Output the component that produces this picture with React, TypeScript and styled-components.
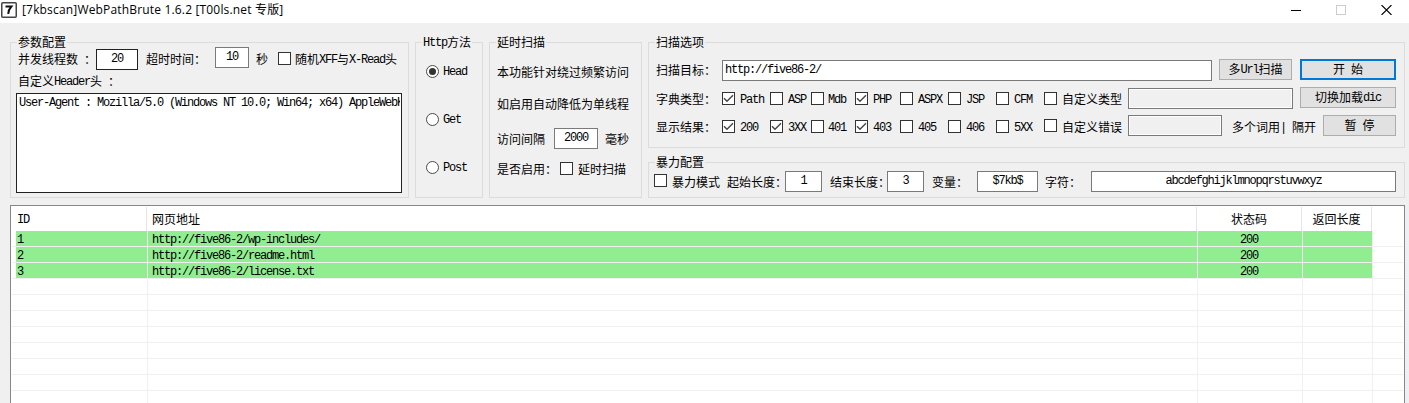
import React from 'react';
import styled, { createGlobalStyle, css } from 'styled-components';

const GlobalStyle = createGlobalStyle`
  * { box-sizing: border-box; }
  html, body { margin: 0; padding: 0; overflow: hidden; background: #f0f0f0; }
`;

const Window = styled.div`
  width: 1409px;
  height: 403px;
  overflow: hidden;
  display: flex;
  flex-direction: column;
  background: #f0f0f0;
  color: #000;
  font: 12px/14px 'Noto Sans CJK SC', sans-serif;
`;

const TitleBar = styled.header`
  height: 23px;
  flex: none;
  display: flex;
  align-items: flex-start;
  padding: 2px 17px 0 1px;
  background: #fff;
`;

const Title = styled.h1`
  margin: 0 auto 0 5px;
  font: 400 12px/16px 'Open Sans', 'Noto Sans CJK SC', sans-serif;
  letter-spacing: 0.17px;
  white-space: pre;
`;

const WindowControls = styled.div`
  display: flex;
  gap: 35px;
  padding-top: 3px;
`;

const Latin = styled.span`
  font-family: 'Liberation Mono', monospace;
  font-size: 12px;
  line-height: 1;
  letter-spacing: -1.2px;
  vertical-align: 1px;
`;

const Label = styled.span`
  display: block;
  height: 14px;
  line-height: 14px;
  white-space: pre;
`;

const Panels = styled.main`
  flex: none;
  height: 163px;
  margin-top: 19px;
  padding: 0 4px 7px 10px;
  display: grid;
  grid-template-columns: 399px 68px 153px 757px;
  column-gap: 6px;
`;

const RightColumn = styled.div`
  display: flex;
  flex-direction: column;
  gap: 14px;
`;

const Group = styled.section<{ $height: number }>`
  height: ${p => p.$height}px;
  border: 1px solid #dcdcdc;
`;

const Legend = styled.div`
  width: max-content;
  height: 12px;
  margin: -8px 0 0 6px;
  padding: 0 1px;
  line-height: 12px;
  white-space: pre;
  background: #f0f0f0;
`;

const Row = styled.div<{ $cols?: string; $height: number; $left?: number; $top?: number }>`
  display: grid;
  grid-template-columns: ${p => p.$cols ?? '1fr'};
  align-items: center;
  height: ${p => p.$height}px;
  margin: ${p => p.$top ?? 0}px 0 0 ${p => p.$left ?? 7}px;
`;

const Field = styled.div<{ $w: number; $dark?: boolean; $disabled?: boolean; $left?: boolean; $align?: string }>`
  width: ${p => p.$w}px;
  height: 21px;
  align-self: ${p => p.$align ?? 'center'};
  padding: 0 2px 3px;
  display: flex;
  align-items: center;
  justify-content: ${p => (p.$left ? 'flex-start' : 'center')};
  border: 1px solid ${p => (p.$dark ? '#222' : '#7a7a7a')};
  background: ${p => (p.$disabled ? '#f0f0f0' : '#fff')};
  ${p => p.$disabled && css`box-shadow: inset 0 0 0 1px #fff;`}
`;

const HeaderBox = styled.div`
  width: 386px;
  height: 100px;
  margin: 2px 0 0 5px;
  padding: 1px 2px;
  border: 1px solid #222;
  background: #fff;
`;

const ClippedLine = styled.div`
  width: 381px;
  overflow: hidden;
  white-space: pre;
`;

const Button = styled.button<{ $w: number; $primary?: boolean; $align?: string }>`
  width: ${p => p.$w}px;
  height: 21px;
  align-self: ${p => p.$align ?? 'center'};
  padding: 0 0 1px;
  display: flex;
  align-items: center;
  justify-content: center;
  border: ${p => (p.$primary ? '2px solid #0078d7' : '1px solid #adadad')};
  background: #e1e1e1;
  color: #000;
  font: inherit;
`;

const Box = styled.span<{ $raise?: boolean }>`
  display: block;
  width: 13px;
  height: 13px;
  margin-bottom: ${p => (p.$raise ? 2 : 0)}px;
  border: 1px solid #333;
  background: #fff;
  svg { display: block; }
`;

const Radio = styled.span`
  display: flex;
  align-items: center;
  justify-content: center;
  width: 13px;
  height: 13px;
  border: 1px solid #4a4a4a;
  border-radius: 50%;
  background: #fff;
`;

const RadioDot = styled.span`
  width: 7px;
  height: 7px;
  border-radius: 50%;
  background: #333;
`;

const ResultTable = styled.section`
  flex: 1;
  width: 1395px;
  margin-left: 10px;
  padding: 1px 1px 0;
  border: 1px solid #828790;
  border-bottom: 0;
  background: #fff;
  overflow: hidden;
`;

const HeadRow = styled.div`
  display: grid;
  grid-template-columns: 135px 1050px 105px 70px 31px;
  height: 24px;
`;

const HeadCell = styled.div<{ $center?: boolean; $pad?: number }>`
  display: flex;
  align-items: center;
  justify-content: ${p => (p.$center ? 'center' : 'flex-start')};
  padding-left: ${p => p.$pad ?? 0}px;
  white-space: pre;
  &:not(:last-child) { border-right: 1px solid #e5e5e5; }
`;

const BodyRow = styled.div<{ $hit?: boolean }>`
  display: grid;
  grid-template-columns: 136px 1050px 105px 70px 30px;
  height: 16px;
  border-bottom: 1px solid #f0f0f0;
  background: ${p => (p.$hit ? 'linear-gradient(#90ee90, #90ee90) 4px 0 / 1356px 15px no-repeat' : '#fff')};
`;

const BodyCell = styled.div<{ $center?: boolean; $pad?: number }>`
  height: 15px;
  display: flex;
  align-items: center;
  justify-content: ${p => (p.$center ? 'center' : 'flex-start')};
  padding: 1px ${p => (p.$center ? 2 : 0)}px 0 ${p => p.$pad ?? 0}px;
  white-space: pre;
  &:not(:last-child) { border-right: 1px solid #f0f0f0; }
`;

/* Half-width runs use a 6px monospace advance, full-width glyphs take 12px. */
function Mixed({ text }: { text: string }) {
  return (
    <Label>
      {text.split(/([\x20-\x7e]+)/).map((part, i) => (i % 2 ? <Latin key={i}>{part}</Latin> : part))}
    </Label>
  );
}

function Check({ on, raise }: { on?: boolean; raise?: boolean }) {
  return (
    <Box $raise={raise}>
      {on && (
        <svg width="11" height="11" viewBox="0 0 11 11">
          <path d="M1 5.2 L4 8.2 L10 2.2" fill="none" stroke="#444" strokeWidth="1.4" />
        </svg>
      )}
    </Box>
  );
}

const OPTION_COLS = '66px 18px 30px 18px 23px 17px 27px 18px 27px 18px 30px 18px 30px 18px 30px 18px 66px';

const types: [string, boolean][] = [
  ['Path', true], ['ASP', false], ['Mdb', false], ['PHP', true], ['ASPX', false], ['JSP', false], ['CFM', false],
];
const codes: [string, boolean][] = [
  ['200', true], ['3XX', true], ['401', false], ['403', true], ['405', false], ['406', false], ['5XX', false],
];
const results = ['http://five86-2/wp-includes/', 'http://five86-2/readme.html', 'http://five86-2/license.txt'];

function Options({ items }: { items: [string, boolean][] }) {
  return (
    <>
      {items.map(([name, on]) => (
        <React.Fragment key={name}>
          <Check on={on} />
          <Mixed text={name} />
        </React.Fragment>
      ))}
    </>
  );
}

export default function App() {
  return (
    <Window>
      <GlobalStyle />
      <TitleBar>
        <svg width="16" height="16" viewBox="0 0 16 16">
          <rect x="0.75" y="0.75" width="14.5" height="14.5" rx="1" fill="#fff" stroke="#444" strokeWidth="1.5" />
          <path d="M4.5 4.5 H10.4 C8.5 6.5 7.3 9 7.2 12" fill="none" stroke="#111" strokeWidth="1.9" />
        </svg>
        <Title>[7kbscan]WebPathBrute 1.6.2 [T00ls.net 专版]</Title>
        <WindowControls>
          <svg width="10" height="10"><path d="M0 5.5H10" stroke="#000" /></svg>
          <svg width="10" height="10"><rect x="0.5" y="0.5" width="9" height="9" fill="none" stroke="#ccc" /></svg>
          <svg width="11" height="10"><path d="M0.5 0L10.5 10M10.5 0L0.5 10" stroke="#000" strokeWidth="1.1" /></svg>
        </WindowControls>
      </TitleBar>

      <Panels>
        <Group $height={156}>
          <Legend><Mixed text="参数配置" /></Legend>
          <Row $height={23} $cols="78px 50px 69px 41px 22px 17px 102px">
            <Mixed text="并发线程数 ：" />
            <Field $w={42} $dark $align="end"><Mixed text="20" /></Field>
            <Mixed text="超时时间：" />
            <Field $w={34} $align="start"><Mixed text="10" /></Field>
            <Mixed text="秒" />
            <Check />
            <Mixed text="随机XFF与X-Read头" />
          </Row>
          <Row $height={21}><Mixed text="自定义Header头 ：" /></Row>
          <HeaderBox>
            <ClippedLine>
              <Mixed text="User-Agent : Mozilla/5.0 (Windows NT 10.0; Win64; x64) AppleWebK" />
            </ClippedLine>
          </HeaderBox>
        </Group>

        <Group $height={156}>
          <Legend><Mixed text="Http方法" /></Legend>
          {['Head', 'Get', 'Post'].map((name, i) => (
            <Row key={name} $height={48} $left={10} $cols="17px 30px">
              <Radio>{i === 0 && <RadioDot />}</Radio>
              <Mixed text={name} />
            </Row>
          ))}
        </Group>

        <Group $height={156}>
          <Legend><Mixed text="延时扫描" /></Legend>
          <Row $height={32} $top={9}><Mixed text="本功能针对绕过频繁访问" /></Row>
          <Row $height={32}><Mixed text="如启用自动降低为单线程" /></Row>
          <Row $height={21} $top={8} $cols="57px 51px 24px">
            <Mixed text="访问间隔" />
            <Field $w={44}><Mixed text="2000" /></Field>
            <Mixed text="毫秒" />
          </Row>
          <Row $height={21} $top={9} $cols="63px 18px 48px">
            <Mixed text="是否启用：" />
            <Check />
            <Mixed text="延时扫描" />
          </Row>
        </Group>

        <RightColumn>
          <Group $height={106}>
            <Legend><Mixed text="扫描选项" /></Legend>
            <Row $height={22} $top={12} $cols="66px 497px 81px 96px">
              <Mixed text="扫描目标：" />
              <Field $w={490} $left $align="end"><Mixed text="http://five86-2/" /></Field>
              <Button $w={73} $align="start"><Mixed text="多Url扫描" /></Button>
              <Button $w={96} $primary $align="start"><Mixed text="开 始" /></Button>
            </Row>
            <Row $height={23} $top={6} $cols={`${OPTION_COLS} 172px 96px`}>
              <Mixed text="字典类型：" />
              <Options items={types} />
              <Check />
              <Mixed text="自定义类型" />
              <Field $w={165} $disabled />
              <Button $w={96} $align="start"><Mixed text="切换加载dic" /></Button>
            </Row>
            <Row $height={23} $top={5} $cols={`${OPTION_COLS} 104px 91px 73px`}>
              <Mixed text="显示结果：" />
              <Options items={codes} />
              <Check raise />
              <Mixed text="自定义错误" />
              <Field $w={94} $disabled $align="start" />
              <Mixed text="多个词用| 隔开" />
              <Button $w={73} $align="start"><Mixed text="暂 停" /></Button>
            </Row>
          </Group>

          <Group $height={36}>
            <Legend><Mixed text="暴力配置" /></Legend>
            <Row $height={21} $top={4} $left={5} $cols="18px 55px 58px 45px 57px 45px 45px 68px 46px 305px">
              <Check raise />
              <Mixed text="暴力模式" />
              <Mixed text="起始长度：" />
              <Field $w={37}><Mixed text="1" /></Field>
              <Mixed text="结束长度：" />
              <Field $w={37}><Mixed text="3" /></Field>
              <Mixed text="变量：" />
              <Field $w={61}><Mixed text="$7kb$" /></Field>
              <Mixed text="字符：" />
              <Field $w={305}><Mixed text="abcdefghijklmnopqrstuvwxyz" /></Field>
            </Row>
          </Group>
        </RightColumn>
      </Panels>

      <ResultTable>
        <HeadRow>
          <HeadCell $pad={5}><Mixed text="ID" /></HeadCell>
          <HeadCell $pad={5}><Mixed text="网页地址" /></HeadCell>
          <HeadCell $center><Mixed text="状态码" /></HeadCell>
          <HeadCell $center><Mixed text="返回长度" /></HeadCell>
          <HeadCell />
        </HeadRow>
        {Array.from({ length: 11 }, (_, i) => (
          <BodyRow key={i} $hit={i < results.length}>
            <BodyCell $pad={5}>{results[i] && <Mixed text={String(i + 1)} />}</BodyCell>
            <BodyCell $pad={4}>{results[i] && <Mixed text={results[i]} />}</BodyCell>
            <BodyCell $center>{results[i] && <Mixed text="200" />}</BodyCell>
            <BodyCell />
            <BodyCell />
          </BodyRow>
        ))}
      </ResultTable>
    </Window>
  );
}
